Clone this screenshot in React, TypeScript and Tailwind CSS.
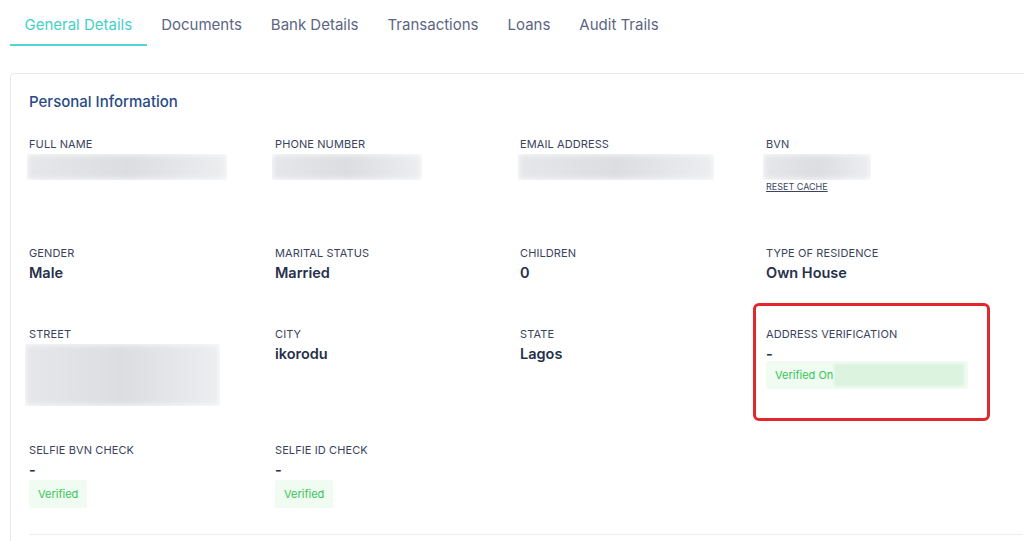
import React from "react";

const tabs = ["General Details", "Documents", "Bank Details", "Transactions", "Loans", "Audit Trails"];

function Blur({ className }: { className: string }) {
  return (
    <div className={`relative overflow-hidden ${className}`}>
      <div className="absolute inset-0 bg-gradient-to-r from-[#e6e7ea] via-[#dcdde1] to-[#eceef0] blur-[3px]" />
    </div>
  );
}

function Label({ children }: { children: React.ReactNode }) {
  return <div className="text-[11px] leading-[14px] text-[#39435e] uppercase tracking-[0.1px]">{children}</div>;
}

function Value({ children }: { children: React.ReactNode }) {
  return <div className="mt-[4px] text-[14.5px] leading-[18px] font-semibold text-[#27304b]">{children}</div>;
}

function Badge({ children }: { children: React.ReactNode }) {
  return (
    <div className="mt-[1px] inline-flex items-center rounded-[3px] bg-[#f0fbf2] px-[9px] h-[28px] text-[11px] text-[#35c657]">
      {children}
    </div>
  );
}

export default function App() {
  return (
    <div className="h-[541px] w-[1024px] overflow-hidden bg-white" style={{ fontFamily: "Inter, 'Noto Sans', sans-serif" }}>
      <div className="flex px-[10px]">
        {tabs.map((t, i) => (
          <div
            key={t}
            className={`px-[14.5px] pt-[15px] pb-[9px] text-[15px] leading-[20px] border-b-[2px] ${
              i === 0 ? "border-[#4fd8d2] text-[#45cfc9]" : "border-transparent text-[#5c6683]"
            }`}
          >
            {t}
          </div>
        ))}
      </div>

      <div className="mt-[27px] ml-[10px] mr-[-20px] rounded-[4px] border border-[#e6e8eb] pl-[18px] pr-[20px] pt-[18px] pb-[30px]">
        <div className="text-[15px] leading-[20px] font-medium text-[#284a86]">Personal Information</div>

        <div className="mt-[25px] grid grid-cols-[246px_245px_246px_1fr]">
          <div className="h-[109px]">
            <Label>Full Name</Label>
            <Blur className="mt-[3px] -ml-[2px] h-[26px] w-[200px]" />
          </div>
          <div>
            <Label>Phone Number</Label>
            <Blur className="mt-[3px] -ml-[3px] h-[26px] w-[150px]" />
          </div>
          <div>
            <Label>Email Address</Label>
            <Blur className="mt-[3px] -ml-[2px] h-[26px] w-[196px]" />
          </div>
          <div>
            <Label>BVN</Label>
            <Blur className="mt-[3px] -ml-[3px] h-[26px] w-[108px]" />
            <div className="mt-[1px] text-[9px] leading-[12px] text-[#3b4560] underline">RESET CACHE</div>
          </div>

          <div className="h-[81px]">
            <Label>Gender</Label>
            <Value>Male</Value>
          </div>
          <div>
            <Label>Marital Status</Label>
            <Value>Married</Value>
          </div>
          <div>
            <Label>Children</Label>
            <Value>0</Value>
          </div>
          <div>
            <Label>Type of Residence</Label>
            <Value>Own House</Value>
          </div>

          <div className="h-[116px]">
            <Label>Street</Label>
            <Blur className="mt-[3px] -ml-[4px] h-[62px] w-[195px]" />
          </div>
          <div>
            <Label>City</Label>
            <Value>ikorodu</Value>
          </div>
          <div>
            <Label>State</Label>
            <Value>Lagos</Value>
          </div>
          <div className="relative">
            <div className="absolute left-[-13px] top-[-24px] h-[118px] w-[237px] rounded-[6px] border-[3px] border-[#e2282d]" />
            <Label>Address Verification</Label>
            <Value>-</Value>
            <div className="-mt-[2px] flex h-[28px] w-[202px] items-center whitespace-nowrap rounded-[3px] bg-[#f0fbf2] pl-[9px] text-[11px] text-[#35c657]">
              Verified On
              <div className="ml-[1px] h-[22px] w-[130px] shrink-0 bg-[#dcf3e0] blur-[1px]" />
            </div>
          </div>

          <div className="h-[91px]">
            <Label>Selfie BVN Check</Label>
            <Value>-</Value>
            <Badge>Verified</Badge>
          </div>
          <div>
            <Label>Selfie ID Check</Label>
            <Value>-</Value>
            <Badge>Verified</Badge>
          </div>
          <div />
          <div />
        </div>

        <div className="border-t border-[#eceef1]" />
      </div>
    </div>
  );
}
